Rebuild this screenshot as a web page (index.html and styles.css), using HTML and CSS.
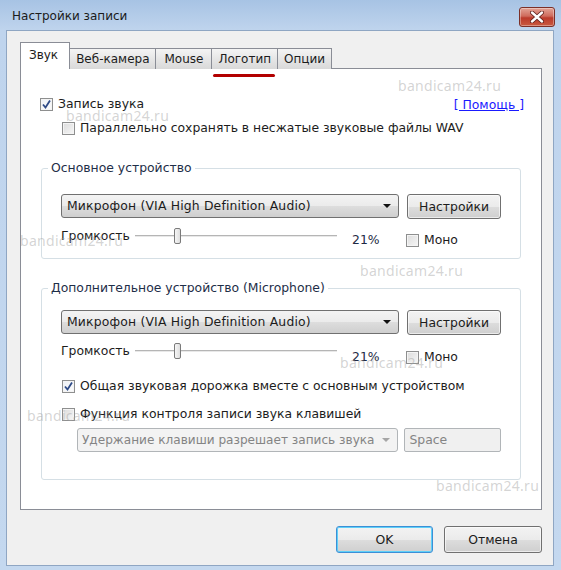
FILE: index.html
```html
<!DOCTYPE html>
<html lang="ru">
<head>
    <meta charset="UTF-8">
    <title>Настройки записи</title>
    <link rel="stylesheet" href="styles.css">
</head>
<body>
    <div class="window">
        <div class="titlebar">
            <span class="title">Настройки записи</span>
            <span class="close-btn">
                <svg width="14" height="12" viewBox="0 0 14 12">
                    <path d="M2 1.5 L12 10.5 M12 1.5 L2 10.5" stroke="#5a1d18" stroke-width="4" stroke-linecap="round"/>
                    <path d="M2 1.5 L12 10.5 M12 1.5 L2 10.5" stroke="#ffffff" stroke-width="2.4" stroke-linecap="round"/>
                </svg>
            </span>
        </div>

        <div class="client">
            <div class="tabs">
                <div class="tab active">Звук</div>
                <div class="tab">Веб-камера</div>
                <div class="tab wide">Mouse</div>
                <div class="tab marked">Логотип</div>
                <div class="tab">Опции</div>
            </div>

            <div class="panel">
                <div class="top-row">
                    <label class="check">
                        <span class="box checked">
                            <svg width="11" height="11" viewBox="0 0 11 11"><path d="M2 5.5 L4.5 8.5 L9 1.5" fill="none" stroke="#2e4a86" stroke-width="1.8"/></svg>
                        </span>
                        Запись звука
                    </label>
                    <a class="help" href="#">[ Помощь ]</a>
                </div>
                <label class="check sub wav-row">
                    <span class="box"></span>
                    Параллельно сохранять в несжатые звуковые файлы WAV
                </label>

                <fieldset class="group main-group">
                    <legend>Основное устройство</legend>
                    <div class="device-row">
                        <div class="combo">Микрофон (VIA High Definition Audio)<span class="arrow"></span></div>
                        <button class="btn setup">Настройки</button>
                    </div>
                    <div class="volume-row">
                        <span class="vol-label">Громкость</span>
                        <div class="slider"><span class="thumb" style="left: 21%"></span></div>
                        <span class="pct">21%</span>
                        <label class="check mono"><span class="box"></span>Моно</label>
                    </div>
                </fieldset>

                <fieldset class="group extra-group">
                    <legend>Дополнительное устройство (Microphone)</legend>
                    <div class="device-row">
                        <div class="combo">Микрофон (VIA High Definition Audio)<span class="arrow"></span></div>
                        <button class="btn setup">Настройки</button>
                    </div>
                    <div class="volume-row">
                        <span class="vol-label">Громкость</span>
                        <div class="slider"><span class="thumb" style="left: 21%"></span></div>
                        <span class="pct">21%</span>
                        <label class="check mono"><span class="box"></span>Моно</label>
                    </div>
                    <label class="check mix-row">
                        <span class="box checked">
                            <svg width="11" height="11" viewBox="0 0 11 11"><path d="M2 5.5 L4.5 8.5 L9 1.5" fill="none" stroke="#2e4a86" stroke-width="1.8"/></svg>
                        </span>
                        Общая звуковая дорожка вместе с основным устройством
                    </label>
                    <label class="check hotkey-row">
                        <span class="box"></span>
                        Функция контроля записи звука клавишей
                    </label>
                    <div class="hotkey-opts">
                        <div class="combo disabled">Удержание клавиши разрешает запись звука<span class="arrow"></span></div>
                        <div class="keybox">Space</div>
                    </div>
                </fieldset>
            </div>

            <div class="actions">
                <button class="btn dlg default">OK</button>
                <button class="btn dlg">Отмена</button>
            </div>
        </div>

        <!-- watermarks -->
        <span class="wm" style="left: 398px; top: 76px">bandicam24.ru</span>
        <span class="wm" style="left: 66px; top: 106px">bandicam24.ru</span>
        <span class="wm" style="left: 20px; top: 231px">bandicam24.ru</span>
        <span class="wm" style="left: 360px; top: 261px">bandicam24.ru</span>
        <span class="wm" style="left: 340px; top: 353px">bandicam24.ru</span>
        <span class="wm" style="left: 27px; top: 406px">bandicam24.ru</span>
        <span class="wm" style="left: 436px; top: 476px">bandicam24.ru</span>
    </div>
</body>
</html>
```

FILE: styles.css
```css
body {
    margin: 0;
    font-family: "DejaVu Sans", sans-serif;
    font-size: 12.4px;
    color: #1c1c1c;
}

.window {
    position: relative;
    width: 561px;
    height: 570px;
    display: flex;
    flex-direction: column;
    overflow: hidden;
    background: linear-gradient(#a7c3e4, #bfd4ed 30px, #c4d8ef);
}

/* title bar */
.titlebar {
    flex: none;
    height: 30px;
    display: flex;
    align-items: flex-start;
    padding: 0 6px 0 12px;
    box-sizing: border-box;
}

.title {
    margin-top: 9px;
    font-size: 12px;
    color: #1b1b1b;
}

.close-btn {
    margin-left: auto;
    margin-top: 7px;
    width: 36px;
    height: 20px;
    box-sizing: border-box;
    display: flex;
    align-items: center;
    justify-content: center;
    border: 1px solid #7c3028;
    border-radius: 3px;
    background: linear-gradient(#e2a497, #cf6b5c 45%, #bb3a2b 55%, #c9593f);
    box-shadow: inset 0 0 0 1px rgba(255, 255, 255, 0.35);
}

/* client area */
.client {
    flex: 1;
    margin: 0 7px 4px 6px;
    padding: 12px 11px 0 13px;
    background: #f0f0f0;
    border: 1px solid #8fa6c3;
}

.tabs {
    display: flex;
    align-items: flex-end;
    height: 26px;
    margin-bottom: -1px;
    position: relative;
    z-index: 1;
    font-size: 12px;
}

.tab {
    position: relative;
    height: 20px;
    line-height: 20px;
    padding: 0 6px;
    margin-right: -1px;
    border: 1px solid #8a8d96;
    border-bottom: none;
    background: linear-gradient(#f4f4f4, #e6e6e6 50%, #d9d9d9);
    color: #1c1c1c;
}

.tab.wide {
    padding: 0 8px;
}

.tab.active {
    height: 26px;
    line-height: 24px;
    padding: 0 11px 0 8px;
    background: #fff;
}

.tab.marked::after {
    content: "";
    position: absolute;
    left: 1px;
    right: 2px;
    top: 25px;
    height: 3px;
    border-radius: 2px;
    background: #b20000;
}

.panel {
    height: 442px;
    box-sizing: border-box;
    padding: 27px 20px 0 19px;
    background: #fff;
    border: 1px solid #8a8d96;
}

/* checkboxes */
.check {
    display: flex;
    align-items: center;
    height: 16px;
    line-height: 16px;
    white-space: nowrap;
}

.box {
    width: 11px;
    height: 11px;
    margin-right: 5px;
    border: 1px solid #8e8f8f;
    background: linear-gradient(135deg, #dcdcdc, #f6f6f6);
    box-shadow: inset 0 0 0 1px #f4f4f4;
    display: flex;
    align-items: center;
    justify-content: center;
    flex: none;
}

.box.checked {
    background: linear-gradient(135deg, #eef1f6, #fbfbfb);
}

.top-row {
    display: flex;
    justify-content: space-between;
    align-items: center;
    margin-right: -3px;
}

.help {
    color: #1a1aff;
    text-decoration: underline;
}

.sub {
    margin: 8px 0 0 22px;
}

/* group boxes */
.group {
    margin: 24px 0 0 1px;
    padding: 0 19px 10px 19px;
    border: 1px solid #d5dfe5;
    border-radius: 3px;
    min-width: 0;
}

.group legend {
    margin-left: -13px;
    padding: 0 3px;
    height: 16px;
    line-height: 16px;
    color: #1e2e48;
}

.extra-group {
    margin-top: 21px;
    padding-bottom: 27px;
}

.device-row {
    display: flex;
    align-items: flex-start;
    gap: 8px;
    margin-top: 18px;
}

.extra-group .device-row {
    margin-top: 14px;
}

.combo {
    position: relative;
    width: 339px;
    height: 24px;
    line-height: 22px;
    box-sizing: border-box;
    padding-left: 5px;
    letter-spacing: 0.17px;
    border: 1px solid #707070;
    border-radius: 3px;
    background: linear-gradient(#f3f3f3, #ebebeb 50%, #dddddd 51%, #cfcfcf);
    white-space: nowrap;
}

.arrow {
    position: absolute;
    right: 7px;
    top: 9px;
    border-left: 4px solid transparent;
    border-right: 4px solid transparent;
    border-top: 4px solid #111;
}

.btn {
    font-family: inherit;
    font-size: 12.4px;
    color: #1c1c1c;
    border: 1px solid #707070;
    border-radius: 3px;
    background: linear-gradient(#f3f3f3, #ebebeb 50%, #dddddd 51%, #cfcfcf);
    box-shadow: inset 0 0 0 1px rgba(255, 255, 255, 0.6);
    padding: 0;
}

.setup {
    width: 94px;
    height: 25px;
}

.volume-row {
    display: flex;
    align-items: flex-start;
    margin-top: 9px;
}

.extra-group .volume-row {
    margin-top: 8px;
}

.vol-label {
    width: 74px;
    height: 16px;
    line-height: 16px;
}

.slider {
    position: relative;
    width: 202px;
    height: 16px;
}

.slider::before {
    content: "";
    position: absolute;
    left: 0;
    right: 0;
    top: 7px;
    height: 1px;
    background: #b5b5b5;
    border-bottom: 1px solid #e8e8e8;
}

.thumb {
    position: absolute;
    top: 0;
    width: 5px;
    height: 14px;
    margin-left: -3px;
    border: 1px solid #7a7a7a;
    border-radius: 2px;
    background: linear-gradient(90deg, #f6f6f6, #dedede);
}

.pct {
    width: 54px;
    margin: 4px 0 0 15px;
    line-height: 16px;
    color: #1e2a44;
}

.mono {
    margin-top: 4px;
}

.extra-group .pct,
.extra-group .mono {
    margin-top: 6px;
}

.mix-row {
    margin: 13px 0 0 1px;
}

.hotkey-row {
    margin: 12px 0 0 1px;
}

.hotkey-opts {
    display: flex;
    gap: 6px;
    margin: 6px 0 0 16px;
}

.combo.disabled {
    width: 323px;
    padding-left: 4px;
    font-size: 12.1px;
    letter-spacing: 0;
    color: #848484;
    border-color: #b1b5b8;
    background: #f3f3f3;
}

.combo.disabled .arrow {
    border-top-color: #a6a6a6;
}

.keybox {
    width: 97px;
    height: 24px;
    line-height: 22px;
    box-sizing: border-box;
    padding-left: 4px;
    border: 1px solid #b1b5b8;
    border-radius: 2px;
    background: #f0f0f0;
    color: #848484;
}

/* dialog buttons */
.actions {
    display: flex;
    justify-content: flex-end;
    gap: 11px;
    margin-top: 16px;
}

.dlg {
    width: 98px;
    height: 27px;
}

.default {
    width: 97px;
    border-color: #3c8fd6;
    box-shadow: inset 0 0 0 1px #5fd0f8;
}

/* watermark */
.wm {
    position: absolute;
    font-family: "Noto Sans", sans-serif;
    font-size: 14px;
    letter-spacing: 0.3px;
    color: rgba(160, 160, 160, 0.45);
    pointer-events: none;
}
```
